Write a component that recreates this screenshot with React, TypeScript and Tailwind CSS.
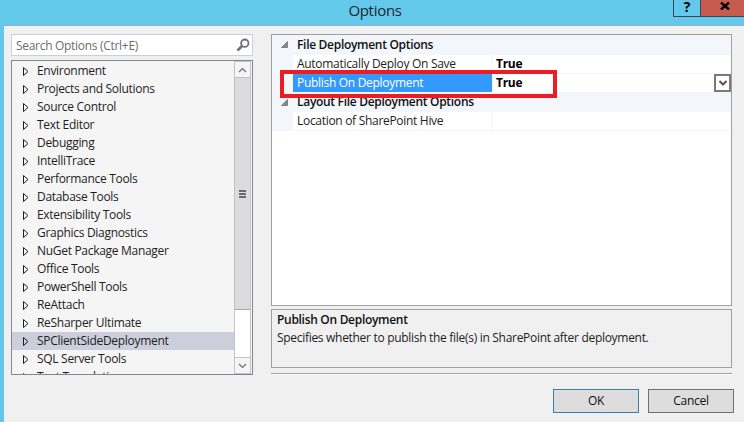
const sans = "font-['Open_Sans','Noto_Sans',sans-serif] tracking-[-0.3px]";

const items = [
  "Environment",
  "Projects and Solutions",
  "Source Control",
  "Text Editor",
  "Debugging",
  "IntelliTrace",
  "Performance Tools",
  "Database Tools",
  "Extensibility Tools",
  "Graphics Diagnostics",
  "NuGet Package Manager",
  "Office Tools",
  "PowerShell Tools",
  "ReAttach",
  "ReSharper Ultimate",
  "SPClientSideDeployment",
  "SQL Server Tools",
  "Text Templating",
];

function Chevron({ up }: { up?: boolean }) {
  return (
    <svg width="9" height="6" viewBox="0 0 9 6" fill="none" stroke="#6d6d6d" strokeWidth="1.2">
      <path d={up ? "M1 5 L4.5 1.5 L8 5" : "M1 1 L4.5 4.5 L8 1"} />
    </svg>
  );
}

function TreeRow({ label, selected }: { label: string; selected?: boolean }) {
  return (
    <div className={`flex h-[18px] shrink-0 items-center pl-[11px] ${selected ? "bg-[#cccedb]" : ""}`}>
      <svg width="6" height="9" viewBox="0 0 6 9" fill="none" stroke="#1e1e1e" className="mr-[8px] shrink-0">
        <path d="M0.5 0.5 L5 4.5 L0.5 8.5 Z" />
      </svg>
      <span className="text-[12px] leading-[18px] whitespace-nowrap text-[#1e1e1e]">{label}</span>
    </div>
  );
}

function GroupRow({ label, first }: { label: string; first?: boolean }) {
  return (
    <div className={`flex shrink-0 items-center bg-[#f3f6fb] pb-[1px] pl-[9px] ${first ? "h-[20px]" : "h-[19px]"}`}>
      <svg width="7" height="7" viewBox="0 0 7 7" className="mr-[9px] shrink-0">
        <path d="M6.5 0.5 L6.5 6.5 L0.5 6.5 Z" fill="#8a8a8a" stroke="#555" strokeWidth="0.6" />
      </svg>
      <span className="text-[12px] font-semibold leading-[18px] text-[#111]">{label}</span>
    </div>
  );
}

function PropRow({
  label,
  value,
  selected,
}: {
  label: string;
  value?: string;
  selected?: boolean;
}) {
  return (
    <div className="flex h-[19px] shrink-0 bg-[#f3f6fb]">
      <div className="w-[21px] shrink-0" />
      <div className={`flex h-[18px] w-[199px] shrink-0 items-center pl-[4px] ${selected ? "bg-[#3399ff] text-white" : "bg-white text-[#1e1e1e]"}`}>
        <span className="text-[12px] leading-[18px] whitespace-nowrap">{label}</span>
      </div>
      <div className="ml-px flex h-[18px] flex-1 items-center justify-between bg-white pl-[3px]">
        <span className="text-[12px] font-bold leading-[18px] text-black">{value}</span>
        {selected && (
          <div className="flex h-[18px] w-[17px] items-center justify-center border-2 border-[#7a7a7a] bg-white">
            <svg width="8" height="6" viewBox="0 0 8 6" fill="none" stroke="#555" strokeWidth="2">
              <path d="M0.5 1 L4 4.5 L7.5 1" />
            </svg>
          </div>
        )}
      </div>
    </div>
  );
}

export default function App() {
  return (
    <div className={`relative flex h-[422px] w-[744px] flex-col overflow-hidden bg-[#63c8ea] ${sans}`}>
      {/* Title bar */}
      <div className="flex h-[25px] shrink-0 items-start">
        <div className="flex-1 pl-[77px] text-center text-[15px] leading-[21px] text-[#1a2530]">Options</div>
        <div className="flex h-[17px] w-[71px] border-b border-[#2c4a58]">
          <div className="flex w-[28px] items-start justify-center border-x border-[#2c4a58] text-[14px] leading-[14px] font-bold text-black">?</div>
          <div className="flex flex-1 justify-center bg-[#c75b50] pt-[2px] pl-[4px]">
            <svg width="10" height="8" viewBox="0 0 10 8" stroke="#000" strokeWidth="2.4" fill="none">
              <path d="M1 0.5 L9 7.5 M9 0.5 L1 7.5" />
            </svg>
          </div>
        </div>
      </div>

      {/* Client area */}
      <div className="ml-[4px] flex min-h-0 flex-1 flex-col border-t border-[#8fb3c2] bg-[#f0f0f0] pt-[8px] pl-[7px]">
        <div className="flex h-[341px] shrink-0">
          {/* Left column */}
          <div className="flex w-[242px] shrink-0 flex-col gap-[4px]">
            <div className="flex h-[22px] items-center justify-between border border-[#cccedb] bg-white pr-[2px] pl-[4px]">
              <span className="pt-[1px] text-[12px] leading-[18px] text-[#6d6d6d]">Search Options (Ctrl+E)</span>
              <svg width="14" height="14" viewBox="0 0 14 14" fill="none" stroke="#717171">
                <circle cx="8.8" cy="5.2" r="3.7" strokeWidth="1.8" />
                <path d="M6 8 L1.5 12.5" strokeWidth="2.6" />
              </svg>
            </div>
            <div className="flex h-[315px] border border-[#828790] bg-[#f5f5f5]">
              <div className="flex min-w-0 flex-1 flex-col overflow-hidden pt-[1px]">
                {items.map((it) => (
                  <TreeRow key={it} label={it} selected={it === "SPClientSideDeployment"} />
                ))}
              </div>
              <div className="mr-[1px] flex w-[17px] shrink-0 flex-col border-x border-[#c2c3c9] bg-white">
                <div className="flex h-[17px] shrink-0 items-center justify-center border-y border-[#c2c3c9] bg-[#f5f5f5]">
                  <Chevron up />
                </div>
                <div className="flex h-[232px] shrink-0 flex-col items-center justify-center gap-[1px] border-b border-[#a6a6a6] bg-[#dcdcdc]">
                  <div className="h-[2px] w-[7px] bg-[#6d6d6d]" />
                  <div className="h-[2px] w-[7px] bg-[#6d6d6d]" />
                  <div className="h-[2px] w-[7px] bg-[#6d6d6d]" />
                </div>
                <div className="flex-1" />
                <div className="flex h-[17px] shrink-0 items-center justify-center border-y border-[#c2c3c9] bg-[#f5f5f5]">
                  <Chevron />
                </div>
              </div>
            </div>
          </div>

          {/* Right column */}
          <div className="ml-[18px] flex w-[461px] shrink-0 flex-col">
            <div className="relative flex h-[272px] shrink-0 flex-col border border-[#a0a0a0] bg-white">
              <GroupRow label="File Deployment Options" first />
              <PropRow label="Automatically Deploy On Save" value="True" />
              <PropRow label="Publish On Deployment" value="True" selected />
              <GroupRow label="Layout File Deployment Options" />
              <PropRow label="Location of SharePoint Hive" />
              <div className="pointer-events-none absolute top-[35px] left-[8px] h-[28px] w-[277px] border-4 border-[#ed1c24]" />
            </div>
            <div className="mt-[3px] h-[59px] shrink-0 border border-[#a0a0a0] bg-[#f0f0f0] px-[5px] pt-[1px]">
              <div className="text-[12px] font-semibold leading-[18px] text-[#111]">Publish On Deployment</div>
              <div className="text-[12px] leading-[18px] text-[#1e1e1e]">
                Specifies whether to publish the file(s) in SharePoint after deployment.
              </div>
            </div>
            <div className="mt-[5px] h-[2px] shrink-0 border-t border-[#a0a0a0] bg-white" />
          </div>
        </div>

        {/* Buttons */}
        <div className="mt-[14px] flex justify-end gap-[9px] pr-[10px]">
          <button className="h-[24px] w-[86px] border border-[#3a7fb0] bg-[#dddddd] text-[12px] text-[#111]">OK</button>
          <button className="h-[24px] w-[86px] border border-[#707070] bg-[#dddddd] text-[12px] text-[#111]">Cancel</button>
        </div>
      </div>
    </div>
  );
}
